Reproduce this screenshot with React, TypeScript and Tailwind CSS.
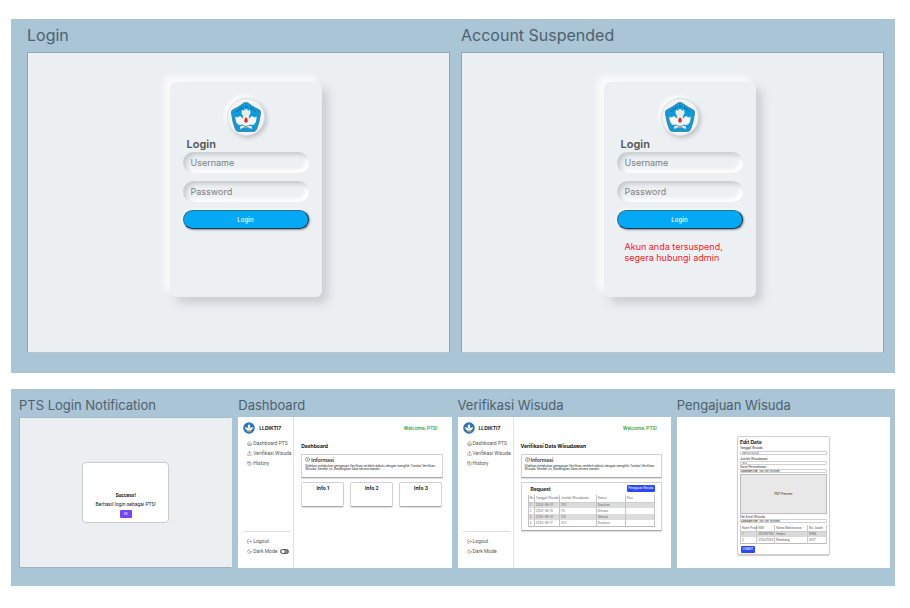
import React from "react";
import { House, Upload, History, LogOut, Moon, Info } from "lucide-react";

function Emblem({ className }: { className: string }) {
  return (
    <svg viewBox="0 0 60 60" className={className} aria-hidden="true">
      <path
        d="M26 2Q30 0 34 2Q46 11 57 16Q60 18 59 23Q57 40 51 55Q49 59 45 59H15Q11 59 9 55Q3 40 1 23Q0 18 3 16Q14 11 26 2Z"
        fill="#0c9bdc"
        stroke="#3f7288"
        strokeWidth="1.500"
      />
      <path d="M10 20Q18 13 24 11M28 9L34 10M38 11Q44 14 50 20" fill="none" stroke="#17506e" strokeWidth="2" strokeDasharray="2 1" />
      <path d="M22 15L26 18L28 13L30 16L32 13L34 18L38 15L39 22L36 28L35 38H25L24 28L21 22Z" fill="#f4f2ea" />
      <path
        d="M9 29L13 31L18 28L22 31L26 35L30 40L34 35L38 31L42 28L47 31L51 29Q52 39 46 45L36 47H24L14 45Q8 39 9 29Z"
        fill="#fafafa"
      />
      <path d="M18 49L30 46L42 49V54L30 51L18 54Z" fill="#e9eeee" />
      <path d="M20 54L40 45M40 54L20 45" stroke="#5b8799" strokeWidth="1.500" />
      <path d="M30 30Q35 36 33 40Q30 43 27 40Q25 36 30 30Z" fill="#ee2328" />
      <path d="M30 18V28M26 21V27M34 21V27" stroke="#c3ccca" strokeWidth="1" />
    </svg>
  );
}

function RoundEmblem({ className }: { className: string }) {
  return (
    <svg viewBox="0 0 24 24" className={className} aria-hidden="true">
      <circle cx="12" cy="12" r="11.500" fill="#1f69b3" />
      <circle cx="12" cy="12" r="9" fill="none" stroke="#5a9ad0" strokeWidth="1.500" strokeDasharray="2 1" />
      <path d="M12 4L15 8L14 12L20 10Q20 15 16 17H8Q4 15 4 10L10 12L9 8Z" fill="#f5f8fa" />
      <path d="M8 17H16V19H8Z" fill="#f0d24a" />
      <circle cx="12" cy="13" r="1.500" fill="#f0d24a" />
    </svg>
  );
}

function LoginScreen({ id, message }: { id: string; message?: string }) {
  const field =
    "h-[21px] w-full rounded-full bg-[#ecf0f3] pb-px pl-2 text-[9px] text-[#555] outline-none placeholder:text-[#7d7f81] shadow-[inset_3px_3px_4px_#c8cbce,inset_-3px_-3px_4px_#fff]";
  return (
    <div className="flex justify-center border border-[#8fa7b4] border-b-[#bcc7cd] bg-[#ebeff2] pt-[29px] pb-[55px] pl-[14px]">
      <form
        className="flex min-h-[215px] w-[152px] flex-col rounded-md bg-[#ecf0f3] px-[13px] pt-4 shadow-[6px_6px_10px_#cbced1,-6px_-6px_6px_#fafbfc]"
        onSubmit={(e) => e.preventDefault()}
      >
        <div className="flex size-[38px] items-center justify-center self-center rounded-full border border-[#dcdfe2] bg-[#f1f3f5] shadow-[2px_2px_4px_#bfc3c6,-2px_-2px_4px_#fff]">
          <Emblem className="size-[30px]" />
        </div>
        <h3 className="pl-1 text-[11px] leading-4 font-semibold text-[#555]">Login</h3>
        <input className={field} id={id + "-user"} aria-label="Username" placeholder="Username" />
        <input
          className={field + " mt-2"}
          id={id + "-pass"}
          type="password"
          aria-label="Password"
          placeholder="Password"
        />
        <button className="mt-2 h-[19px] w-full rounded-full border border-[#2d6f96] border-r-[#1b3a4c] border-b-[#1b3a4c] bg-[#03a9f4] text-[6px] font-medium tracking-wide text-white shadow-[1px_1px_2px_#8c8f92,-1px_-1px_2px_#fff]">
          Login
        </button>
        {message && <p className="pt-3 pl-2 text-[9px] leading-[11px] text-[#ff1a1f]">{message}</p>}
      </form>
    </div>
  );
}

function Shell({ toggle, title, children }: { toggle?: boolean; title: string; children: React.ReactNode }) {
  const link = "flex h-[10px] items-center gap-px pl-1 font-['Roboto','Inter',sans-serif] text-[#555] whitespace-nowrap";
  const icon = "size-[5px] shrink-0";
  return (
    <div className="flex h-[151px] bg-white text-[5px] leading-[6px]">
      <nav className="flex w-14 shrink-0 flex-col border-r border-[#dfe1e3] pt-1 pr-[3px] pb-3 pl-[5px]">
        <div className="mb-[3px] flex h-[14px] items-center gap-1">
          <RoundEmblem className="size-3" />
          <strong className="font-bold text-[#222]">LLDIKTI7</strong>
        </div>
        <a href="#dashboard" className={link}>
          <House className={icon} /> Dashboard PTS
        </a>
        <a href="#verifikasi" className={link}>
          <Upload className={icon} /> Verifikasi Wisuda
        </a>
        <a href="#history" className={link}>
          <History className={icon} /> History
        </a>
        <div className="mt-auto border-t border-[#dedede] pt-1">
          <a href="#logout" className={link}>
            <LogOut className={icon} /> Logout
          </a>
          <label className={link}>
            <Moon className={icon} /> Dark Mode
            {toggle && (
              <input
                type="checkbox"
                className="ml-[2px] h-[5px] w-[9px] shrink-0 appearance-none rounded-full border border-[#555] bg-[radial-gradient(circle_at_2px_50%,#fff_1px,#888_2px)]"
              />
            )}
          </label>
        </div>
      </nav>
      <main className="flex min-w-0 flex-1 flex-col pt-2 pr-[9px] pl-[7px]">
        <p className="pr-[5px] text-right font-['Roboto','Inter',sans-serif] font-medium text-[#27a54a]">
          Welcome, PTS!
        </p>
        <h3 className="mt-3 mb-[5px] font-bold text-[#111]">{title}</h3>
        <section className="h-6 rounded-[1px] border border-[#d2d2d2] border-b-[#aaa] px-[3px] pt-px shadow-[0_1px_1px_#ddd]">
          <h4 className="flex h-[7px] items-center gap-px font-semibold text-[#333]">
            <Info className={icon} /> Informasi
          </h4>
          <p className="mt-[2px] text-[3px] leading-[3px] text-[#222]">
            <span className="block whitespace-nowrap">
              Silahkan melakukan pengajuan Verifikasi terlebih dahulu dengan mengklik Tombol Verifikasi
            </span>
            <span className="block">Wisuda. Setelah itu, Bandingkan Data secara mandiri.</span>
          </p>
        </section>
        {children}
      </main>
    </div>
  );
}

const requests = [
  ["1", "2024-08-01", "100", "Diajukan"],
  ["2", "2024-08-15", "75", "Ditinjau"],
  ["3", "2024-09-01", "120", "Selesai"],
  ["4", "2024-09-17", "103", "Disetujui"],
];

function RequestTable() {
  const cell = "border-x border-[#c4c4c4] pl-px text-left font-normal";
  return (
    <section className="mt-1 h-[49px] rounded-[1px] border border-[#d2d2d2] border-b-[#aaa] px-[6px] pt-[2px] shadow-[0_1px_1px_#ddd]">
      <div className="flex items-center justify-between pl-[3px]">
        <h4 className="font-bold text-[#222]">Request</h4>
        <button className="h-[7px] w-7 rounded-[1px] bg-[#2a48ff] font-['Roboto','Inter',sans-serif] text-[3px] leading-[3px] text-white">
          Pengajuan Wisuda
        </button>
      </div>
      <table className="mt-[3px] w-full table-fixed border-collapse text-[3px] leading-[4px] text-[#666]">
        <thead>
          <tr className="h-[7px] border-b border-[#ccc]">
            <th className={cell + " w-[5%]"}>No</th>
            <th className={cell + " w-[20%]"}>Tanggal Wisuda</th>
            <th className={cell + " w-[29%]"}>Jumlah Wisudawan</th>
            <th className={cell + " w-[23%]"}>Status</th>
            <th className={cell}>Aksi</th>
          </tr>
        </thead>
        <tbody>
          {requests.map((row) => (
            <tr key={row[0]} className="h-[6px] odd:bg-[#dcdcdc] last:border-b last:border-[#bbb]">
              {row.map((v) => (
                <td key={v} className={cell}>
                  {v}
                </td>
              ))}
              <td className={cell} />
            </tr>
          ))}
        </tbody>
      </table>
    </section>
  );
}

function EditForm() {
  const input =
    "block h-1 w-full rounded-[1px] border border-[#d0d0d0] pl-px text-[3px] leading-[3px] text-[#333]";
  const file =
    "block h-1 w-full rounded-[1px] border border-[#d0d0d0] text-[3px] leading-[2px] text-[#222] file:mr-[2px] file:h-[2px] file:bg-[#e4e4e4] file:leading-[2px]";
  const cell = "border-x border-[#ccc] pl-px text-left font-normal whitespace-nowrap";
  return (
    <div className="flex h-[151px] items-start justify-center bg-white pt-[19px]">
      <form
        className="w-[93px] rounded-[2px] border border-[#d0d0d0] px-[2px] pt-px pb-px text-[3px] leading-[4px] text-[#222] shadow-[0_1px_1px_#ccc]"
        onSubmit={(e) => e.preventDefault()}
      >
        <h3 className="text-[5px] leading-[8px] font-bold">Edit Data</h3>
        <label htmlFor="tanggal" className="block h-[5px]">
          Tanggal Wisuda
        </label>
        <input id="tanggal" className={input} defaultValue="09/20/2024" />
        <label htmlFor="jumlah" className="mt-[2px] block h-1">
          Jumlah Wisudawan
        </label>
        <input id="jumlah" className={input} defaultValue="103" />
        <label htmlFor="surat" className="block h-1">
          Surat Permohonan
        </label>
        <input id="surat" type="file" className={file} />
        <div className="mt-px flex h-10 items-center justify-center border border-[#bdbdbd] bg-[#e8e8e8]">
          PDF Preview
        </div>
        <label htmlFor="excel" className="block h-[5px] pt-px">
          File Excel Wisuda
        </label>
        <input id="excel" type="file" className={file} />
        <table className="mt-[2px] w-full table-fixed border-collapse text-[#555]">
          <thead>
            <tr className="h-[6px] border-b border-[#ccc]">
              <th className={cell + " w-[19%]"}>Kode Prodi</th>
              <th className={cell + " w-[21%]"}>NIM</th>
              <th className={cell + " w-[38%]"}>Nama Mahasiswa</th>
              <th className={cell}>No. Ijazah</th>
            </tr>
          </thead>
          <tbody>
            <tr className="h-[6px] bg-[#dadada]">
              <td className={cell}>1</td>
              <td className={cell}>202107100</td>
              <td className={cell}>Andini</td>
              <td className={cell}>0784</td>
            </tr>
            <tr className="h-[6px] border-b border-[#bbb]">
              <td className={cell}>2</td>
              <td className={cell}>211437024</td>
              <td className={cell}>Bambang</td>
              <td className={cell}>0417</td>
            </tr>
          </tbody>
        </table>
        <button className="mt-[2px] ml-px block h-[7px] w-[14px] rounded-[1px] bg-[#2a48ff] font-['Roboto','Inter',sans-serif] text-[3px] leading-[3px] text-white">
          SUBMIT
        </button>
      </form>
    </div>
  );
}

function Notification() {
  return (
    <div className="flex h-[151px] items-center justify-center border border-t-[#a2b9c5] border-r-transparent border-b-[#9cb3bf] border-l-[#9cb3bf] bg-[#ebeff2]">
      <div
        role="dialog"
        aria-label="Success"
        className="flex h-[61px] w-[87px] flex-col items-center rounded border border-[#c9cbcd] bg-white pt-7 font-['Roboto','Inter',sans-serif] text-[5px] leading-[9px] text-[#222]"
      >
        <strong className="font-bold">Success!</strong>
        <p className="whitespace-nowrap">Berhasil login sebagai PTS!</p>
        <button className="mt-px h-2 w-3 rounded-[1px] bg-[#7446fb] text-[3px] leading-[3px] text-white">OK</button>
      </div>
    </div>
  );
}

function Artboard({ title, small, children }: { title: string; small?: boolean; children: React.ReactNode }) {
  return (
    <section className="min-w-0 flex-1">
      <h2
        className={
          small
            ? "mb-[2px] text-[13px] leading-5 whitespace-nowrap text-[#4f616c]"
            : "mb-[5px] text-[16px] leading-6 whitespace-nowrap text-[#4f616c]"
        }
      >
        {title}
      </h2>
      {children}
    </section>
  );
}

export default function App() {
  return (
    <div className="flex min-h-screen flex-col gap-4 bg-white pt-[19px] pr-[15px] pb-[22px] pl-[11px] font-['Inter','Liberation_Sans',sans-serif]">
      <div className="flex gap-[11px] bg-[#a9c5d6] pt-1 pr-[11px] pb-[20px] pl-4">
        <Artboard title="Login">
          <LoginScreen id="login" />
        </Artboard>
        <Artboard title="Account Suspended">
          <LoginScreen id="suspended" message="Akun anda tersuspend, segera hubungi admin" />
        </Artboard>
      </div>
      <div className="flex gap-[6px] bg-[#a9c5d6] pt-[6px] pr-[5px] pb-[18px] pl-2">
        <Artboard title="PTS Login Notification" small>
          <Notification />
        </Artboard>
        <Artboard title="Dashboard" small>
          <Shell title="Dashboard" toggle>
            <div className="mt-1 grid grid-cols-3 gap-[6px]">
              {["Info 1", "Info 2", "Info 3"].map((name) => (
                <section
                  key={name}
                  className="h-[25px] rounded-[2px] border border-[#d2d2d2] border-b-[#aaa] pt-[2px] text-center font-bold text-[#222] shadow-[0_1px_1px_#ddd]"
                >
                  {name}
                </section>
              ))}
            </div>
          </Shell>
        </Artboard>
        <Artboard title="Verifikasi Wisuda" small>
          <Shell title="Verifikasi Data Wisudawan">
            <RequestTable />
          </Shell>
        </Artboard>
        <Artboard title="Pengajuan Wisuda" small>
          <EditForm />
        </Artboard>
      </div>
    </div>
  );
}
